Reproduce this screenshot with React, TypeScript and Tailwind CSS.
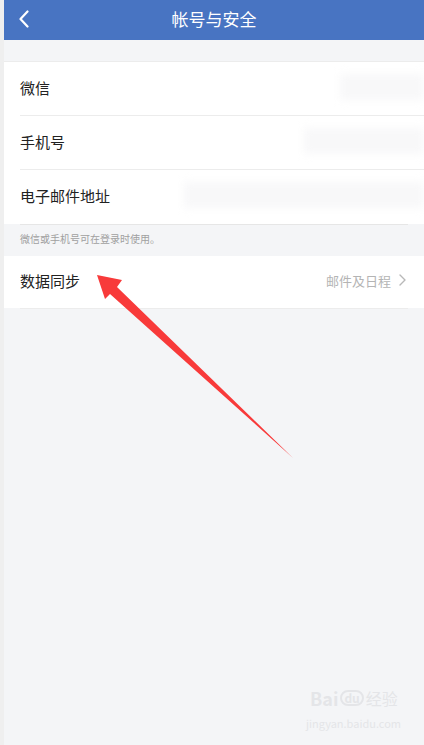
const font = { fontFamily: '"Noto Sans CJK SC", "Noto Sans", sans-serif' };

function Row({ label, blur, last }: { label: string; blur: string; last?: boolean }) {
  return (
    <div className="relative flex h-[54px] items-center pb-[4px] pl-4">
      <span className="text-[15px] leading-none text-[#222]">{label}</span>
      <div className={`absolute right-0 top-[12px] h-[26px] bg-[#f8f8f9] blur-[4px] ${blur}`}></div>
      {!last && <div className="absolute bottom-0 left-4 right-0 h-px bg-[#ececec]"></div>}
    </div>
  );
}

export default function App() {
  return (
    <div className="relative flex min-h-[745px] w-[424px] overflow-hidden" style={font}>
      <div className="w-[4px] bg-[#efefef]"></div>
      <div className="flex-1 bg-[#f4f5f7]">
        <header className="relative flex h-[40px] items-center justify-center bg-[#4874c2] pb-[4px]">
          <svg className="absolute left-[13px] top-[10px]" width="16" height="18" viewBox="0 0 16 18">
            <path d="M10.5 1.5 L3.5 9 L10.5 16.5" fill="none" stroke="white" strokeWidth="2.2" strokeLinecap="round" strokeLinejoin="round" />
          </svg>
          <h1 className="text-[17px] leading-none text-white">帐号与安全</h1>
        </header>

        <div className="mt-[21px] border-t border-[#ececec] bg-white">
          <Row label="微信" blur="w-[84px]" />
          <Row label="手机号" blur="w-[120px]" />
          <Row label="电子邮件地址" blur="w-[240px]" last />
        </div>
        <div className="ml-4 mr-4 h-px bg-[#e6e6e6]"></div>

        <p className="px-4 pb-[10px] pt-[6px] text-[10px] leading-[15px] text-[#a0a0a0]">微信或手机号可在登录时使用。</p>

        <div className="flex h-[52px] items-center justify-between bg-white pb-[4px] pl-4 pr-[18px]">
          <span className="text-[15px] leading-none text-[#222]">数据同步</span>
          <div className="flex items-center gap-[8px]">
            <span className="text-[13px] leading-none text-[#b4b4b4]">邮件及日程</span>
            <svg width="7" height="12" viewBox="0 0 7 12">
              <path d="M1 1 L6 6 L1 11" fill="none" stroke="#b8b8b8" strokeWidth="1.4" strokeLinecap="round" strokeLinejoin="round" />
            </svg>
          </div>
        </div>
        <div className="ml-4 mr-4 h-px bg-[#ececec]"></div>
      </div>

      <svg className="absolute left-0 top-0" width="424" height="745" viewBox="0 0 424 745">
        <polygon points="97,275 122,280 117,287 293,458 110,294 105,299" fill="#f83a3a" />
      </svg>

      <div className="absolute left-[310px] top-[689px] flex items-center gap-[2px] text-[#e4e5e8]">
        <span className="text-[18px] font-bold leading-none">Bai</span>
        <span className="rounded-full border-2 border-[#e4e5e8] px-[2px] text-[12px] font-bold leading-none">du</span>
        <span className="text-[16px] leading-none">经验</span>
      </div>
      <div className="absolute left-[306px] top-[718px] text-[11px] leading-none text-[#e4e5e8]">jingyan.baidu.com</div>
    </div>
  );
}
